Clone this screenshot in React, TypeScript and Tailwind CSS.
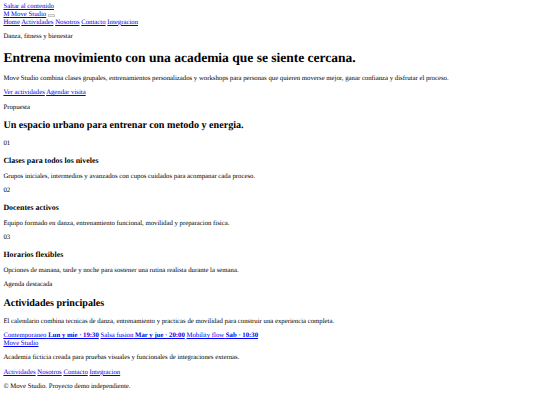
import React from 'react';

// Unstyled document look: browser defaults scaled to a 540px window (16px -> 6.75px)
const link = 'text-[#0000ee] underline';
const p = 'my-[6.75px]';

const features = [
  { n: '01', title: 'Clases para todos los niveles', text: 'Grupos iniciales, intermedios y avanzados con cupos cuidados para acompanar cada proceso.' },
  { n: '02', title: 'Docentes activos', text: 'Equipo formado en danza, entrenamiento funcional, movilidad y preparacion fisica.' },
  { n: '03', title: 'Horarios flexibles', text: 'Opciones de manana, tarde y noche para sostener una rutina realista durante la semana.' },
];

const schedule = [
  { name: 'Contemporaneo', when: 'Lun y mie · 19:30' },
  { name: 'Salsa fusion', when: 'Mar y jue · 20:00' },
  { name: 'Mobility flow', when: 'Sab · 10:30' },
];

export default function App() {
  return (
    <div className="min-h-screen bg-white p-[3.375px] font-['Liberation_Serif','Times_New_Roman',serif] text-[6.75px] leading-[7.76px] text-black [text-rendering:geometricPrecision]">
      <a href="#main" className={link}>Saltar al contenido</a>

      {/* ── Header ── */}
      <header>
        <a href="#" className={link}><span>M</span> Move Studio</a>{' '}
        <button type="button" aria-label="Menu" className="inline-block h-[3px] w-[7px] border border-[#c8c8c8] bg-[#efefef] align-baseline" />
        <nav>
          <a href="#" className={link}>Home</a>{' '}
          <a href="#" className={link}>Actividades</a>{' '}
          <a href="#" className={link}>Nosotros</a>{' '}
          <a href="#" className={link}>Contacto</a>{' '}
          <a href="#" className={link}>Integracion</a>
        </nav>
      </header>

      <main id="main">
        {/* ── Hero ── */}
        <section>
          <p className={p}>Danza, fitness y bienestar</p>
          <h1 className="my-[9.05px] text-[13.5px] leading-[15.52px] font-bold">Entrena movimiento con una academia que se siente cercana.</h1>
          <p className={p}>
            Move Studio combina clases grupales, entrenamientos personalizados y workshops para personas que quieren moverse mejor, ganar confianza y disfrutar el proceso.
          </p>
          <p className={p}>
            <a href="#" className={link}>Ver actividades</a>{' '}
            <a href="#" className={link}>Agendar visita</a>
          </p>
        </section>

        {/* ── Propuesta ── */}
        <section>
          <p className={p}>Propuesta</p>
          <h2 className="my-[8.4px] text-[10.125px] leading-[11.64px] font-bold">Un espacio urbano para entrenar con metodo y energia.</h2>
          {features.map((f) => (
            <article key={f.n}>
              <p className={p}>{f.n}</p>
              <h3 className="my-[7.9px] text-[7.9px] leading-[9.08px] font-bold">{f.title}</h3>
              <p className={p}>{f.text}</p>
            </article>
          ))}
        </section>

        {/* ── Agenda ── */}
        <section>
          <p className={p}>Agenda destacada</p>
          <h2 className="my-[8.4px] text-[10.125px] leading-[11.64px] font-bold">Actividades principales</h2>
          <p className={p}>
            El calendario combina tecnicas de danza, entrenamiento y practicas de movilidad para construir una experiencia completa.
          </p>
          <div>
            {schedule.map((s, i) => (
              <React.Fragment key={s.name}>
                {i > 0 && ' '}
                <a href="#" className={link}>
                  <span>{s.name}</span> <strong className="font-bold">{s.when}</strong>
                </a>
              </React.Fragment>
            ))}
          </div>
        </section>
      </main>

      {/* ── Footer ── */}
      <footer>
        <a href="#" className={link}>Move Studio</a>
        <p className={p}>Academia ficticia creada para pruebas visuales y funcionales de integraciones externas.</p>
        <p className={p}>
          <a href="#" className={link}>Actividades</a>{' '}
          <a href="#" className={link}>Nosotros</a>{' '}
          <a href="#" className={link}>Contacto</a>{' '}
          <a href="#" className={link}>Integracion</a>
        </p>
        <p className={p}>© Move Studio. Proyecto demo independiente.</p>
      </footer>
    </div>
  );
}
